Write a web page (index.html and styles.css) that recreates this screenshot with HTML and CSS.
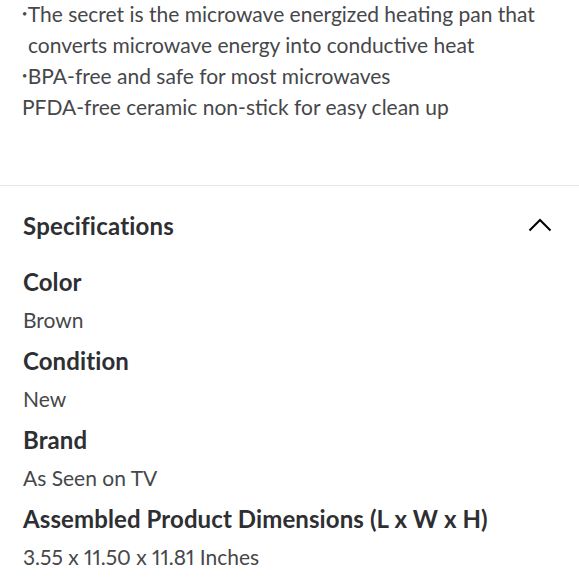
FILE: index.html
```html
<!DOCTYPE html>
<html>
<head>
<meta charset="utf-8">
<link rel="stylesheet" href="styles.css">
</head>
<body>
<div class="desc">
  <p class="line"><span class="bullet">•</span>The secret is the microwave energized heating pan that</p>
  <p class="line indent">converts microwave energy into conductive heat</p>
  <p class="line"><span class="bullet">•</span>BPA-free and safe for most microwaves</p>
  <p class="line">PFDA-free ceramic non-stick for easy clean up</p>
</div>
<section class="specs">
  <div class="specs-head">
    <h2 class="specs-title">Specifications</h2>
    <svg class="chevron" width="24" height="14" viewBox="0 0 24 14"><path d="M1.5 12.5 L12 2 L22.5 12.5" fill="none" stroke="#000" stroke-width="2"/></svg>
  </div>
  <dl class="spec-list">
    <dt class="spec-name">Color</dt>
    <dd class="spec-value">Brown</dd>
    <dt class="spec-name">Condition</dt>
    <dd class="spec-value">New</dd>
    <dt class="spec-name">Brand</dt>
    <dd class="spec-value">As Seen on TV</dd>
    <dt class="spec-name">Assembled Product Dimensions (L x W x H)</dt>
    <dd class="spec-value">3.55 x 11.50 x 11.81 Inches</dd>
  </dl>
</section>
</body>
</html>
```
FILE: styles.css
```css
html, body {
  margin: 0;
  padding: 0;
  background: #fff;
}
body {
  font-family: "Lato", "Liberation Sans", sans-serif;
  color: #46474a;
  width: 579px;
  height: 580px;
  overflow: hidden;
  font-variant-numeric: proportional-nums;
}
.desc {
  margin-top: -2px;
  padding: 0 22px 63px;
}
.line {
  margin: 0;
  font-size: 21px;
  line-height: 31px;
  white-space: pre;
}
.bullet {
  font-size: 9px;
  line-height: 1;
  vertical-align: 5px;
  margin-right: 0.5px;
}
.indent {
  padding-left: 6px;
}
.specs {
  border-top: 1px solid #e6e6e8;
  border-bottom: 1px solid #e6e6e8;
  padding: 23px 27px 6px 23px;
}
.specs-head {
  display: flex;
  align-items: center;
  justify-content: space-between;
  height: 32px;
}
.specs-title {
  margin: 0;
  font-size: 24px;
  font-weight: 700;
  letter-spacing: 0.2px;
  color: #2e2f32;
}
.chevron {
  display: block;
}
.spec-list {
  margin: 26px 0 0;
}
.spec-name {
  margin: 0;
  font-size: 24px;
  font-weight: 700;
  letter-spacing: 0.1px;
  color: #2e2f32;
  line-height: 30px;
}
.spec-value {
  margin: 8px 0 11px;
  font-size: 21px;
  line-height: 30px;
  color: #46474a;
}
```
